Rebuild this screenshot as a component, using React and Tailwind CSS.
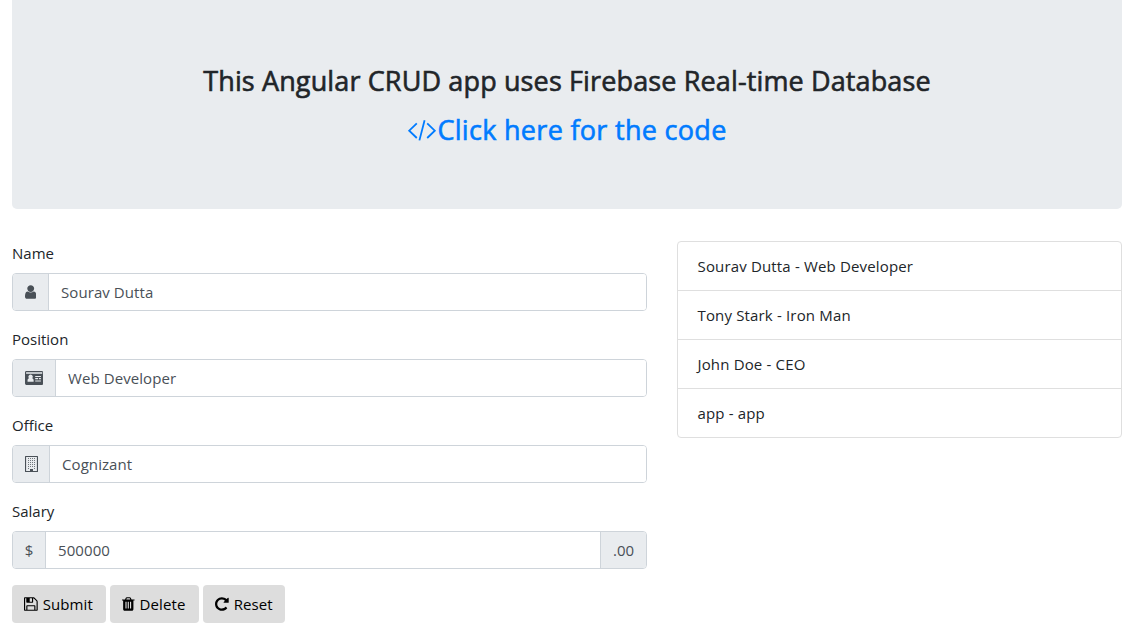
const people = ['Sourav Dutta - Web Developer', 'Tony Stark - Iron Man', 'John Doe - CEO', 'app - app'];

function UserIcon() {
  return (
    <svg viewBox="256 0 1280 1792" className="h-4 w-[11.43px]" fill="currentColor">
      <path d="M1536 1399q0 109-62.5 187t-150.5 78h-854q-88 0-150.5-78t-62.5-187q0-85 8.5-160.5t31.5-152 58.5-131 94-89 134.5-34.5q131 128 313 128t313-128q76 0 134.5 34.5t94 89 58.5 131 31.5 152 8.5 160.5zm-256-887q0 159-112.5 271.5t-271.5 112.5-271.5-112.5-112.5-271.5 112.5-271.5 271.5-112.5 271.5 112.5 112.5 271.5z" />
    </svg>
  );
}

function CardIcon() {
  return (
    <svg viewBox="0 0 18.3 16" className="h-4 w-[18.3px]" fill="currentColor">
      <path
        fillRule="evenodd"
        d="M1.4 1h15.5a1.400 1.400 0 0 1 1.400 1.400v11.200a1.400 1.400 0 0 1-1.400 1.400H1.400A1.400 1.400 0 0 1 0 13.600V2.400A1.400 1.400 0 0 1 1.400 1zM1.100 2.300v1.400h16.100V2.300zM2.600 11.700h6c.3-2.100-.4-3.300-1.500-3.400a2.100 2.100 0 1 0-3 0c-1.200.1-1.800 1.300-1.500 3.400zM10.200 5.900v1.200h5.700V5.900zM10.200 8.100v1.200h2.900V8.100zM14 8.100v1.200h1.900V8.100zM10.200 10.400v1.200h5.700v-1.200z"
      />
    </svg>
  );
}

function BuildingIcon() {
  return (
    <svg viewBox="0 0 13 16" className="h-4 w-[13px]" fill="currentColor">
      <path
        fillRule="evenodd"
        d="M.6 0h11.800a.6.6 0 0 1 .6.6v14.800a.6.6 0 0 1-.6.6H.6a.6.6 0 0 1-.6-.6V.6A.6.6 0 0 1 .6 0zM1.100 1.100v13.800H5v-2h3v2h3.900V1.100z"
      />
      <path d="M3 2.500h7M3 4.500h7M3 6.500h7M3 8.500h7M3 10.500h7M3 12.500h1M9 12.500h1" fill="none" stroke="currentColor" strokeWidth="1" strokeDasharray="1 1" opacity=".75" />
      <path d="M5 13h3v2H5z" />
    </svg>
  );
}

function CodeIcon() {
  return (
    <svg viewBox="0 0 30 28" className="h-7 w-[30px] shrink-0" fill="none" stroke="currentColor" strokeWidth="1.800">
      <path d="M9.800 7.400 2.200 14.700l7.600 7.300M17.600 4.200l-5.200 20.200M20.200 7.400l7.600 7.300-7.600 7.300" />
    </svg>
  );
}

function SaveIcon() {
  return (
    <svg viewBox="128 0 1536 1792" className="h-4 w-[13.71px]" fill="currentColor">
      <path d="M512 1536h768v-384h-768v384zm896 0h128v-896q0-14-10-38.5t-20-34.5l-281-281q-10-10-34-20t-39-10v416q0 40-28 68t-68 28h-576q-40 0-68-28t-28-68v-416h-128v1280h128v-416q0-40 28-68t68-28h832q40 0 68 28t28 68v416zm-384-928v-320q0-13-9.5-22.5t-22.5-9.5h-192q-13 0-22.5 9.5t-9.5 22.5v320q0 13 9.5 22.5t22.5 9.5h192q13 0 22.5-9.5t9.5-22.5zm640 32v928q0 40-28 68t-68 28h-1344q-40 0-68-28t-28-68v-1344q0-40 28-68t68-28h928q40 0 88 20t76 48l280 280q28 28 48 76t20 88z" />
    </svg>
  );
}

function TrashIcon() {
  return (
    <svg viewBox="192 0 1408 1792" className="h-4 w-[12.57px]" fill="currentColor">
      <path d="M704 1376v-704q0-14-9-23t-23-9h-64q-14 0-23 9t-9 23v704q0 14 9 23t23 9h64q14 0 23-9t9-23zm256 0v-704q0-14-9-23t-23-9h-64q-14 0-23 9t-9 23v704q0 14 9 23t23 9h64q14 0 23-9t9-23zm256 0v-704q0-14-9-23t-23-9h-64q-14 0-23 9t-9 23v704q0 14 9 23t23 9h64q14 0 23-9t9-23zm-544-992h448l-48-117q-7-9-17-11h-317q-10 2-17 11zm928 32v64q0 14-9 23t-23 9h-96v948q0 83-47 143.500t-113 60.500h-832q-66 0-113-58.500t-47-141.500v-952h-96q-14 0-23-9t-9-23v-64q0-14 9-23t23-9h309l70-167q15-37 54-63t79-26h320q40 0 79 26t54 63l70 167h309q14 0 23 9t9 23z" />
    </svg>
  );
}

function ResetIcon() {
  return (
    <svg viewBox="128 0 1536 1792" className="h-4 w-[13.71px]" fill="currentColor">
      <path d="M1664 256v448q0 26-19 45t-45 19h-448q-42 0-59-40-17-39 14-69l138-138q-148-137-349-137-104 0-198.500 40.500t-163.500 109.500-109.500 163.500-40.500 198.500 40.500 198.500 109.500 163.500 163.500 109.500 198.500 40.500q119 0 225-52t179-147q7-10 23-12 15 0 25 9l137 138q9 8 9.500 20.500t-7.500 22.500q-109 132-264 204.500t-327 72.500q-156 0-298-61t-245-164-164-245-61-298 61-298 164-245 245-164 298-61q147 0 284.500 55.500t244.500 156.500l130-129q29-31 70-14 39 17 39 59z" />
    </svg>
  );
}

function Field({ label, addon, addonWidth, value, suffix }) {
  return (
    <div className="mb-4">
      <label className="mb-2 block h-6 leading-6">{label}</label>
      <div className="flex h-[38px] overflow-hidden rounded border border-[#ced4da] text-[#495057]">
        <span className={`flex shrink-0 items-center justify-center border-r border-[#ced4da] bg-[#e9ecef] ${addonWidth}`}>{addon}</span>
        <input className="min-w-0 flex-1 bg-white px-3 tracking-[0.08px] outline-none" defaultValue={value} />
        {suffix && <span className="flex w-[46px] shrink-0 items-center justify-center border-l border-[#ced4da] bg-[#e9ecef]">{suffix}</span>}
      </div>
    </div>
  );
}

function Button({ icon, width, children }) {
  return (
    <button type="button" className={`flex h-[38px] items-center gap-[5px] rounded bg-[#ddd] pl-3 tracking-[0.1px] text-black ${width}`}>
      {icon}
      <span className="whitespace-nowrap">{children}</span>
    </button>
  );
}

export default function App() {
  return (
    <div className="h-[635px] overflow-hidden bg-white pr-2 pl-3 font-['Open_Sans',sans-serif] text-[15px] leading-6 text-[#212529]">
      <header className="flex h-[209px] flex-col items-center rounded-b-[5px] bg-[#e9ecef] pt-16 text-[27px] font-medium tracking-[0.13px] [-webkit-text-stroke:0.6px_currentColor]">
        <h1 className="h-[34px] leading-[34px] whitespace-nowrap">This Angular CRUD app uses Firebase Real-time Database</h1>
        <a href="#code" className="mt-[15px] flex h-[34px] items-center leading-[34px] whitespace-nowrap text-[#007bff]">
          <CodeIcon />
          <span className="tracking-[0.3px]">Click here for the code</span>
        </a>
      </header>
      <main className="mt-8 flex items-start gap-[30px]">
        <form className="w-[635px] shrink-0">
          <Field label="Name" addon={<UserIcon />} addonWidth="w-9" value="Sourav Dutta" />
          <Field label="Position" addon={<CardIcon />} addonWidth="w-[43px]" value="Web Developer" />
          <Field label="Office" addon={<BuildingIcon />} addonWidth="w-[37px]" value="Cognizant" />
          <Field label="Salary" addon="$" addonWidth="w-[33px]" value="500000" suffix=".00" />
          <div className="flex gap-1">
            <Button icon={<SaveIcon />} width="w-[94px]">Submit</Button>
            <Button icon={<TrashIcon />} width="w-[89px]">Delete</Button>
            <Button icon={<ResetIcon />} width="w-[82px]">Reset</Button>
          </div>
        </form>
        <ul className="flex-1 divide-y divide-[#dfdfdf] rounded border border-[#dfdfdf] tracking-[0.16px]">
          {people.map((p) => (
            <li key={p} className="flex h-[49px] items-center px-[19.5px] last:h-12">{p}</li>
          ))}
        </ul>
      </main>
    </div>
  );
}
